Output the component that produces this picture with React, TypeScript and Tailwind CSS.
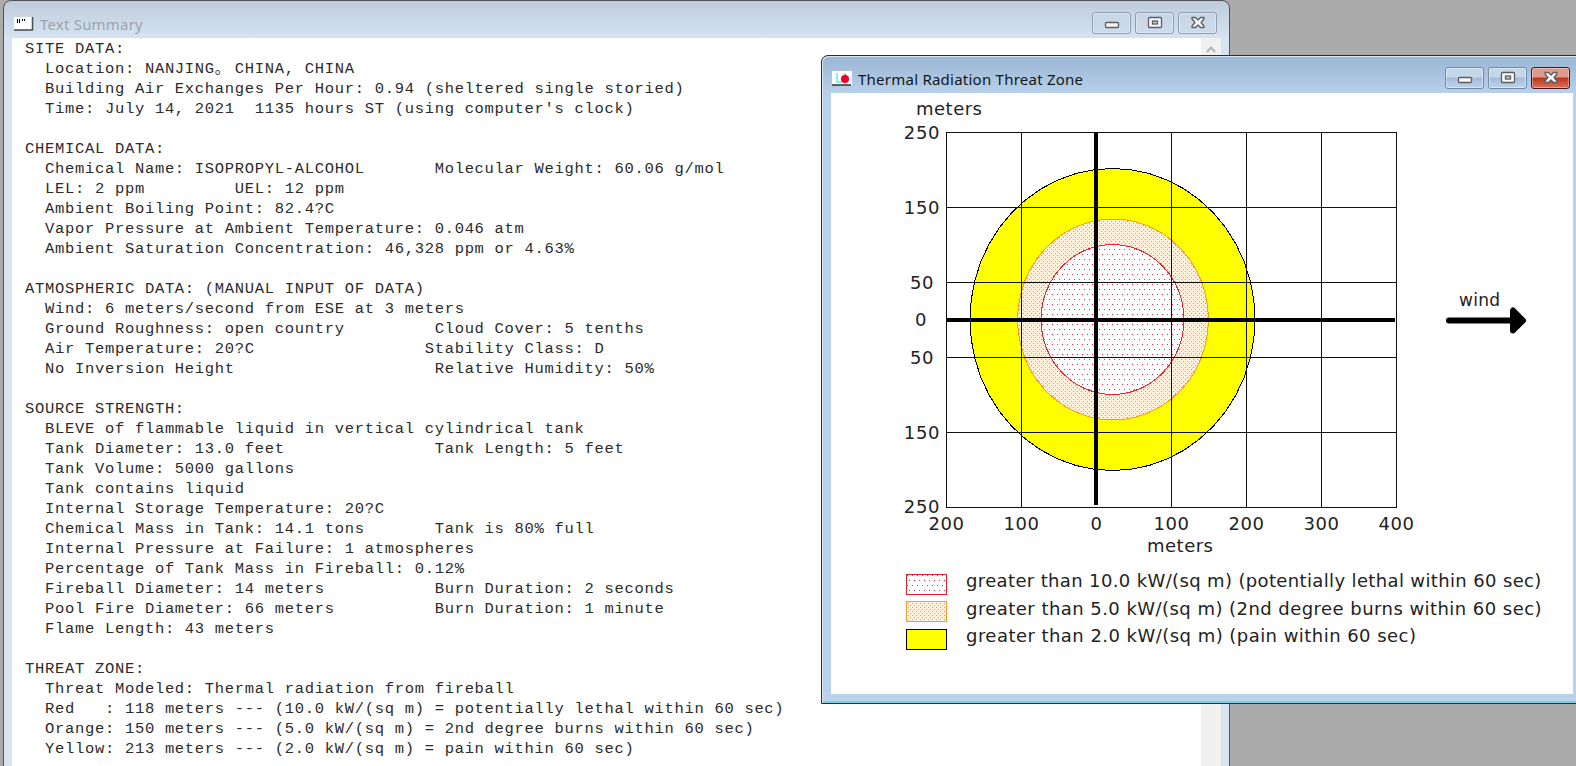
import type { ReactNode } from 'react'

const REPORT = `SITE DATA:
  Location: NANJING。 CHINA, CHINA
  Building Air Exchanges Per Hour: 0.94 (sheltered single storied)
  Time: July 14, 2021  1135 hours ST (using computer's clock)

CHEMICAL DATA:
  Chemical Name: ISOPROPYL-ALCOHOL       Molecular Weight: 60.06 g/mol
  LEL: 2 ppm         UEL: 12 ppm
  Ambient Boiling Point: 82.4?C
  Vapor Pressure at Ambient Temperature: 0.046 atm
  Ambient Saturation Concentration: 46,328 ppm or 4.63%

ATMOSPHERIC DATA: (MANUAL INPUT OF DATA)
  Wind: 6 meters/second from ESE at 3 meters
  Ground Roughness: open country         Cloud Cover: 5 tenths
  Air Temperature: 20?C                 Stability Class: D
  No Inversion Height                    Relative Humidity: 50%

SOURCE STRENGTH:
  BLEVE of flammable liquid in vertical cylindrical tank
  Tank Diameter: 13.0 feet               Tank Length: 5 feet
  Tank Volume: 5000 gallons
  Tank contains liquid
  Internal Storage Temperature: 20?C
  Chemical Mass in Tank: 14.1 tons       Tank is 80% full
  Internal Pressure at Failure: 1 atmospheres
  Percentage of Tank Mass in Fireball: 0.12%
  Fireball Diameter: 14 meters           Burn Duration: 2 seconds
  Pool Fire Diameter: 66 meters          Burn Duration: 1 minute
  Flame Length: 43 meters

THREAT ZONE:
  Threat Modeled: Thermal radiation from fireball
  Red   : 118 meters --- (10.0 kW/(sq m) = potentially lethal within 60 sec)
  Orange: 150 meters --- (5.0 kW/(sq m) = 2nd degree burns within 60 sec)
  Yellow: 213 meters --- (2.0 kW/(sq m) = pain within 60 sec)`

const LEGEND = [
  {
    label: 'greater than 10.0 kW/(sq m) (potentially lethal within 60 sec)',
    fill: 'url(#redDots)',
    stroke: '#e0202c',
    tracking: 'tracking-[0.360px]',
  },
  {
    label: 'greater than 5.0 kW/(sq m) (2nd degree burns within 60 sec)',
    fill: 'url(#orangeDots)',
    stroke: '#f79a28',
    tracking: 'tracking-[0.450px]',
  },
  {
    label: 'greater than 2.0 kW/(sq m) (pain within 60 sec)',
    fill: '#ffff00',
    stroke: '#000',
    tracking: 'tracking-[0.460px]',
  },
]

const X_TICKS = [
  { x: 115, label: '200' },
  { x: 190, label: '100' },
  { x: 265, label: '0' },
  { x: 340, label: '100' },
  { x: 415, label: '200' },
  { x: 490, label: '300' },
  { x: 565, label: '400' },
]

const Y_TICKS = [
  { y: 39, x: 109, label: '250' },
  { y: 114, x: 109, label: '150' },
  { y: 189, x: 103, label: '50' },
  { y: 226, x: 96, label: '0' },
  { y: 264, x: 103, label: '50' },
  { y: 339, x: 109, label: '150' },
  { y: 413, x: 109, label: '250' },
]

/** Outline of a zone as a closed polygon */
function zonePoints(cx: number, cy: number, rx: number, ry: number) {
  return Array.from({ length: 48 }, (_, i) => {
    const a = (i * Math.PI) / 24
    return `${(cx + rx * Math.cos(a)).toFixed(1)},${(cy + ry * Math.sin(a)).toFixed(1)}`
  }).join(' ')
}

type Glyph = 'min' | 'max' | 'close'

function ButtonGlyph({ kind }: { kind: Glyph }) {
  return (
    <svg width="16" height="14" viewBox="0 0 16 14" fill="#f8f8f8" stroke="#5b5d63" strokeWidth="1.300">
      {kind === 'min' && <rect x="1.500" y="6.500" width="13" height="5" rx="1" />}
      {kind === 'max' && (
        <>
          <rect x="1.500" y="1.500" width="13" height="10" rx="1" />
          <rect x="5.500" y="5" width="5" height="3" fill="#b9cbe0" />
        </>
      )}
      {kind === 'close' && (
        <path d="M2 1.500h3.500L8 4l2.500-2.500H14v1.500L11 6.500l3 3.500v1.500h-3.500L8 9l-2.500 2.500H2V10l3-3.500L2 3z" strokeLinejoin="round" />
      )}
    </svg>
  )
}

function WindowButton({ kind, className }: { kind: Glyph; className: string }) {
  return (
    <button className={`flex h-[22px] w-[39px] items-center justify-center rounded-[3px] border ${className}`}>
      <ButtonGlyph kind={kind} />
    </button>
  )
}

function TitleBar({ icon, children, buttons }: { icon: ReactNode; children: ReactNode; buttons: ReactNode }) {
  return (
    <div className="flex h-[37px] shrink-0 pl-[10px]">
      <div className="flex h-[46px] items-center gap-[6px] text-[15px] whitespace-nowrap">
        {icon}
        {children}
      </div>
      <div className="ml-auto flex gap-[4px] pt-[11px]">{buttons}</div>
    </div>
  )
}

function ReportLine({ text }: { text: string }) {
  const [before, after] = text.split('。')
  return (
    <div className="flex h-[20px]">
      <span>{before}</span>
      {/* the full-width stop takes a single column */}
      {after !== undefined && (
        <>
          <span className="w-[10px] font-['Noto_Sans_CJK_SC',sans-serif] text-[15px] leading-[15px] tracking-normal">。</span>
          <span>{after}</span>
        </>
      )}
    </div>
  )
}

function TextSummary() {
  const soft = 'border-[#8f9fb4] bg-[#c9d7e7]/60 shadow-[inset_0_0_0_1px_rgba(255,255,255,0.35)]'
  return (
    <section className="absolute top-0 left-[3px] flex h-[800px] w-[1227px] flex-col rounded-t-[8px] border border-[#505358] bg-[#d7e4f1] bg-[linear-gradient(#bfccdc,#d6e4f1_38px)] px-[8px]">
      <div className="-mx-[8px] pr-[12px]">
        <TitleBar
          icon={
            <svg width="20" height="16" viewBox="0 0 20 16">
              <rect y="1" width="18" height="12" fill="#fff" />
              <path d="M0 14h18.500V1" fill="none" stroke="#4c4c4c" strokeWidth="1.500" />
              <path d="M3.500 3v4M5.500 3v4M8.500 3v2M10.500 3v2" stroke="#000" />
            </svg>
          }
          buttons={
            <>
              <WindowButton kind="min" className={soft} />
              <WindowButton kind="max" className={soft} />
              <WindowButton kind="close" className={soft} />
            </>
          }
        >
          <span className="tracking-[0.200px] text-[#9ea3a9]">Text Summary</span>
        </TitleBar>
      </div>
      <div className="flex grow bg-white">
        <pre className="grow pt-[1px] pl-[13px] font-['Liberation_Mono',monospace] text-[15.500px] leading-[20px] tracking-[0.690px] text-[#2b2b2b]">
          {REPORT.split('\n').map((line, i) => (
            <ReportLine key={i} text={line} />
          ))}
        </pre>
        <div className="flex w-[20px] justify-center bg-[#f0f0f0] pt-[7px]">
          <svg width="10" height="8" viewBox="0 0 10 8">
            <path d="M1 7l4-4.500L9 7" fill="none" stroke="#b4b4b4" strokeWidth="2" />
          </svg>
        </div>
      </div>
    </section>
  )
}

function ThreatChart() {
  return (
    <svg width="742" height="465" viewBox="0 0 742 465" className="block" fontSize="18" fill="#222">
      <defs>
        <pattern id="redDots" width="5" height="10" patternUnits="userSpaceOnUse">
          <rect width="5" height="10" fill="#fff" />
          <rect x="1" y="1" width="1" height="1" fill="#f03040" />
          <rect x="3" y="6" width="1" height="1" fill="#f03040" />
        </pattern>
        <pattern id="orangeDots" width="4" height="4" patternUnits="userSpaceOnUse">
          <rect width="4" height="4" fill="#fff0dc" />
          <rect width="1" height="1" fill="#ff9038" />
          <rect x="2" y="2" width="1" height="1" fill="#ff9038" />
        </pattern>
      </defs>
      <g shapeRendering="crispEdges">
        <polygon points={zonePoints(281.5, 226.5, 142.5, 151)} fill="#ffff00" stroke="#000" />
        <polygon points={zonePoints(282, 226.5, 95.5, 100.5)} fill="url(#orangeDots)" stroke="#ff9a20" />
        <polygon points={zonePoints(281.5, 226.5, 71.5, 75)} fill="url(#redDots)" stroke="#f02030" />
        <path
          d="M115.500 39.500h450v375h-450zM190.500 39v375M340.500 39v375M415.500 39v375M490.500 39v375M115 114.500h450M115 189.500h450M115 264.500h450M115 339.500h450"
          fill="none"
          stroke="#111"
        />
        <path d="M265 40v372M116 226.500h448" stroke="#000" strokeWidth="4" />
      </g>
      <text x="85" y="22" textLength="66">meters</text>
      {Y_TICKS.map((t) => (
        <text key={t.y} x={t.x} y={t.y + 6.5} textAnchor="end" letterSpacing="0.6">{t.label}</text>
      ))}
      {X_TICKS.map((t) => (
        <text key={t.x} x={t.x + 0.5} y="437" textAnchor="middle" letterSpacing="0.6">{t.label}</text>
      ))}
      <text x="316" y="459" textLength="66">meters</text>
      <text x="628" y="213" textLength="41" fontSize="17">wind</text>
      <path d="M618 227.500h62" stroke="#000" strokeWidth="6" strokeLinecap="round" />
      <path d="M682 217.500v20l10-10z" fill="#000" stroke="#000" strokeWidth="6" strokeLinejoin="round" />
    </svg>
  )
}

function ThreatZone() {
  const blue = 'border-[#7489a6] bg-[linear-gradient(#c3d6ea_45%,#a3bcd8_50%,#bed3ea)] shadow-[inset_0_0_0_1px_rgba(255,255,255,0.45)]'
  return (
    <section className="absolute top-[55px] left-[821px] flex h-[649px] w-[762px] flex-col rounded-tl-[7px] border border-[#22303a] bg-[#b9d1ea] bg-[linear-gradient(#9ab5d3,#b9d1ea_38px)] pl-[9px] shadow-[inset_1px_1px_0_#dbe8f4,inset_0_-2px_0_#77d0e0]">
      <div className="-ml-[9px] pr-[12px]">
        <TitleBar
          icon={
            <svg width="20" height="16" viewBox="0 0 20 16">
              <rect width="20" height="14" fill="#fff" />
              <path d="M5 2v9h5" fill="none" stroke="#6fe3ee" strokeWidth="1.500" />
              <path d="M13 2.500v10" stroke="#e8002c" />
              <circle cx="13" cy="8" r="4" fill="#e8002c" />
              <path d="M0 14h19" stroke="#303030" strokeWidth="1.500" />
            </svg>
          }
          buttons={
            <>
              <WindowButton kind="min" className={blue} />
              <WindowButton kind="max" className={blue} />
              <WindowButton kind="close" className="border-[#4a1520] bg-[linear-gradient(#e09a8c_45%,#bd3418_50%,#d8745e)] shadow-[inset_0_0_0_1px_rgba(255,255,255,0.35)]" />
            </>
          }
        >
          <span className="tracking-[0.240px] text-[#101820]">Thermal Radiation Threat Zone</span>
        </TitleBar>
      </div>
      <div className="h-[601px] w-[742px] bg-white font-['DejaVu_Sans',sans-serif]">
        <ThreatChart />
        <div className="flex flex-col pt-[9px] pl-[75px]">
          {LEGEND.map((item) => (
            <div key={item.stroke} className="flex h-[27.500px] items-center text-[18px] whitespace-nowrap text-[#222]">
              <svg width="41" height="22" className="mt-[8px] mr-[19px] shrink-0">
                <rect x="0.500" y="0.500" width="40" height="20" fill={item.fill} stroke={item.stroke} />
              </svg>
              <span className={item.tracking}>{item.label}</span>
            </div>
          ))}
        </div>
      </div>
    </section>
  )
}

export default function App() {
  return (
    <main className="relative h-[766px] w-[1576px] overflow-hidden bg-[#ababab] font-['Noto_Sans',sans-serif]">
      <TextSummary />
      <ThreatZone />
    </main>
  )
}
